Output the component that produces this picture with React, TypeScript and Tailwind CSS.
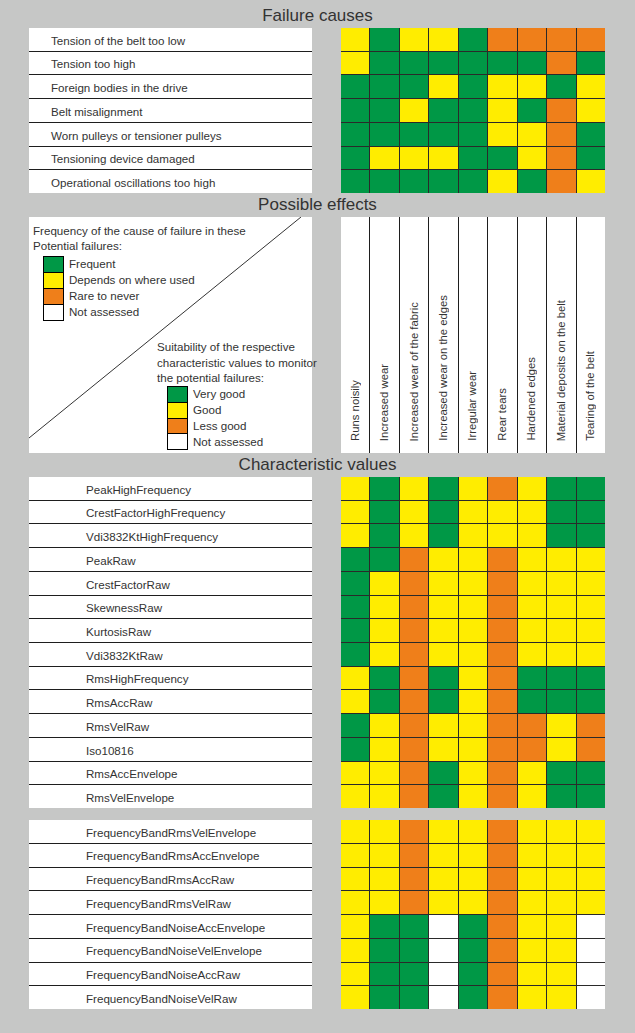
import React from "react";

type K = "G" | "Y" | "O" | "W";
const CLR: Record<K, string> = {
  G: "bg-[#009846]",
  Y: "bg-[#ffed00]",
  O: "bg-[#ef7f1a]",
  W: "bg-white",
};

const causes = [
  "Tension of the belt too low",
  "Tension too high",
  "Foreign bodies in the drive",
  "Belt misalignment",
  "Worn pulleys or tensioner pulleys",
  "Tensioning device damaged",
  "Operational oscillations too high",
];
const causesGrid = [
  "YGYYGOOOO",
  "YGGGGGGOG",
  "GGGYGYYGY",
  "GGYGGYGOY",
  "GGGGGYYOG",
  "GYYYGGYOG",
  "GGGGGYGOY",
];

const effects = [
  "Runs noisily",
  "Increased wear",
  "Increased wear of the fabric",
  "Increased wear on the edges",
  "Irregular wear",
  "Rear tears",
  "Hardened edges",
  "Material deposits on the belt",
  "Tearing of the belt",
];

const values1 = [
  "PeakHighFrequency",
  "CrestFactorHighFrequency",
  "Vdi3832KtHighFrequency",
  "PeakRaw",
  "CrestFactorRaw",
  "SkewnessRaw",
  "KurtosisRaw",
  "Vdi3832KtRaw",
  "RmsHighFrequency",
  "RmsAccRaw",
  "RmsVelRaw",
  "Iso10816",
  "RmsAccEnvelope",
  "RmsVelEnvelope",
];
const values1Grid = [
  "YGYGYOYGG",
  "YGYGYYYGG",
  "YGYGYYYGG",
  "GGOYYOYYY",
  "GYOYYOYYY",
  "GYOYYOYYY",
  "GYOYYOYYY",
  "GYOYYOYYY",
  "YGOGYOGGG",
  "YGOGYOGGG",
  "GYOYYOOYO",
  "GYOYYOOYO",
  "YYOGYOYGG",
  "YYOGYOYGG",
];

const values2 = [
  "FrequencyBandRmsVelEnvelope",
  "FrequencyBandRmsAccEnvelope",
  "FrequencyBandRmsAccRaw",
  "FrequencyBandRmsVelRaw",
  "FrequencyBandNoiseAccEnvelope",
  "FrequencyBandNoiseVelEnvelope",
  "FrequencyBandNoiseAccRaw",
  "FrequencyBandNoiseVelRaw",
];
const values2Grid = [
  "YYOYYOYYY",
  "YYOYYOYYY",
  "YYOYYOYYY",
  "YYOYYOYYY",
  "YGGWGOYYW",
  "YGGWGOYYW",
  "YGGWGOYYW",
  "YGGWGOYYW",
];

function Title({ children }: { children: React.ReactNode }) {
  return (
    <div className="h-[24px] leading-[24px] text-center text-[17px] text-[#333]">
      {children}
    </div>
  );
}

function Labels({ items, cls, pad }: { items: string[]; cls: string; pad: string }) {
  return (
    <div className={`grid gap-px bg-[#1e1e1e] w-[283px] ${cls}`}>
      {items.map((t) => (
        <div
          key={t}
          className={`bg-white flex items-center pt-[2px] text-[11.6px] text-[#333] whitespace-nowrap ${pad}`}
        >
          {t}
        </div>
      ))}
    </div>
  );
}

function Cells({ rows, cls }: { rows: string[]; cls: string }) {
  return (
    <div className={`grid grid-cols-9 gap-px bg-[#2a2a2a] w-[264px] ${cls}`}>
      {rows.flatMap((r, i) =>
        r.split("").map((c, j) => <div key={`${i}-${j}`} className={CLR[c as K]} />)
      )}
    </div>
  );
}

function LegendList({ items }: { items: [K, string][] }) {
  return (
    <div className="flex flex-col">
      {items.map(([c, t], i) => (
        <div key={t} className="flex h-[16px] items-center">
          <div
            className={`w-[21px] h-[16px] border-x border-t border-black ${CLR[c]} ${
              i === items.length - 1 ? "border-b h-[17px]" : ""
            }`}
          />
          <span className="ml-[5px] text-[11.6px] text-[#333] leading-[14px] whitespace-nowrap">
            {t}
          </span>
        </div>
      ))}
    </div>
  );
}

export default function App() {
  return (
    <div className="w-[635px] h-[1033px] bg-[#c6c7c6] font-['Liberation_Sans',Arial,sans-serif] overflow-hidden">
      <div className="h-[28px] pt-[4px]">
        <Title>Failure causes</Title>
      </div>
      <div className="flex pl-[29px] gap-[29px]">
        <Labels items={causes} cls="grid-rows-7 h-[165px]" pad="pl-[22px]" />
        <Cells rows={causesGrid} cls="grid-rows-7 h-[165px]" />
      </div>

      <Title>Possible effects</Title>
      <div className="flex pl-[29px] gap-[29px]">
        <div className="relative w-[283px] h-[236px] bg-white">
          <svg
            className="absolute inset-0 w-full h-full"
            viewBox="0 0 283 236"
            preserveAspectRatio="none"
          >
            <line x1="0" y1="221" x2="272" y2="0" stroke="#333" strokeWidth="1" />
          </svg>
          <div className="relative pt-[6px] pl-[4px] text-[11.6px] leading-[15px] text-[#333]">
            <div className="whitespace-nowrap">Frequency of the cause of failure in these</div>
            <div>Potential failures:</div>
            <div className="mt-[3px] ml-[10px]">
              <LegendList
                items={[
                  ["G", "Frequent"],
                  ["Y", "Depends on where used"],
                  ["O", "Rare to never"],
                  ["W", "Not assessed"],
                ]}
              />
            </div>
          </div>
          <div className="relative mt-[18px] ml-[128px] text-[11.6px] leading-[15.5px] text-[#333]">
            <div className="pt-[1px] whitespace-nowrap">Suitability of the respective</div>
            <div className="whitespace-nowrap">characteristic values to monitor</div>
            <div className="whitespace-nowrap">the potential failures:</div>
            <div className="ml-[10px]">
              <LegendList
                items={[
                  ["G", "Very good"],
                  ["Y", "Good"],
                  ["O", "Less good"],
                  ["W", "Not assessed"],
                ]}
              />
            </div>
          </div>
        </div>
        <div className="grid grid-cols-9 gap-px bg-[#1e1e1e] w-[264px] h-[236px]">
          {effects.map((e) => (
            <div key={e} className="bg-white flex flex-col justify-end items-center pb-[12px]">
              <span className="[writing-mode:vertical-rl] rotate-180 text-[11.3px] text-[#333] whitespace-nowrap leading-[13px]">
                {e}
              </span>
            </div>
          ))}
        </div>
      </div>

      <Title>Characteristic values</Title>
      <div className="flex pl-[29px] gap-[29px]">
        <Labels items={values1} cls="grid-rows-14 h-[331px]" pad="pl-[57px]" />
        <Cells rows={values1Grid} cls="grid-rows-14 h-[331px]" />
      </div>
      <div className="flex pl-[29px] gap-[29px] mt-[12px]">
        <Labels items={values2} cls="grid-rows-8 h-[189px]" pad="pl-[57px]" />
        <Cells rows={values2Grid} cls="grid-rows-8 h-[189px]" />
      </div>
    </div>
  );
}
